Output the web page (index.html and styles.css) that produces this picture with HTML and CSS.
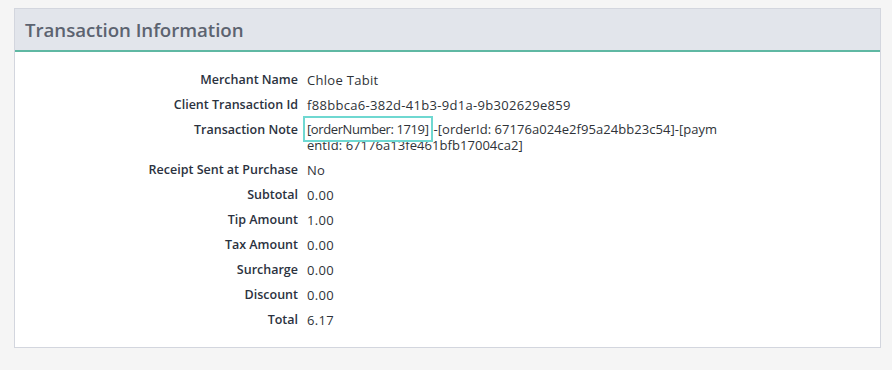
FILE: index.html
```html
<!DOCTYPE html>
<html>
<head>
<meta charset="utf-8">
<link rel="stylesheet" href="styles.css">
</head>
<body>
<section class="panel">
  <header class="panel-head"><h2>Transaction Information</h2></header>
  <div class="panel-body">
    <dl class="details">
      <dt>Merchant Name</dt><dd>Chloe Tabit</dd>
      <dt>Client Transaction Id</dt><dd>f88bbca6-382d-41b3-9d1a-9b302629e859</dd>
      <dt>Transaction Note</dt><dd class="note"><span class="hl">[orderNumber: 1719]</span>-[orderId: 67176a024e2f95a24bb23c54]-[paymentId: 67176a13fe461bfb17004ca2]</dd>
      <dt>Receipt Sent at Purchase</dt><dd>No</dd>
      <dt>Subtotal</dt><dd>0.00</dd>
      <dt>Tip Amount</dt><dd>1.00</dd>
      <dt>Tax Amount</dt><dd>0.00</dd>
      <dt>Surcharge</dt><dd>0.00</dd>
      <dt>Discount</dt><dd>0.00</dd>
      <dt>Total</dt><dd>6.17</dd>
    </dl>
  </div>
</section>
</body>
</html>
```
FILE: styles.css
```css
html, body {
  margin: 0;
  padding: 0;
  background: #f5f5f5;
  font-family: "Open Sans", "Liberation Sans", sans-serif;
}
body {
  padding: 8px 11px 0 14px;
}
.panel {
  border: 1px solid #d3d6de;
  background: #fff;
  box-sizing: border-box;
  width: 867px;
}
.panel-head {
  background: #e2e5eb;
  border-bottom: 2px solid #5fb8a3;
  height: 41px;
  box-sizing: content-box;
  display: flex;
  align-items: center;
  padding: 0 10px;
}
.panel-head h2 {
  margin: 0;
  font-size: 18.7px;
  font-weight: 600;
  color: #5c6370;
  letter-spacing: -0.05px;
}
.panel-body {
  padding: 20px 0 19px;
}
.details {
  margin: 0;
  display: grid;
  grid-template-columns: 283px 412px;
  column-gap: 9px;
  row-gap: 9px;
  font-size: 12.5px;
  line-height: 16px;
}
.details dt {
  text-align: right;
  font-weight: 600;
  color: #2b3240;
}
.details dd {
  margin: 0;
  color: #2f3338;
  font-size: 13px;
  letter-spacing: 0.3px;
  word-break: break-all;
}
.details dd.note {
  margin-top: -1px;
  letter-spacing: 0.05px;
}
.hl {
  outline: 2px solid #6fd8d1;
  outline-offset: 2px;
  margin-right: 5px;
  letter-spacing: -0.4px;
}
```
